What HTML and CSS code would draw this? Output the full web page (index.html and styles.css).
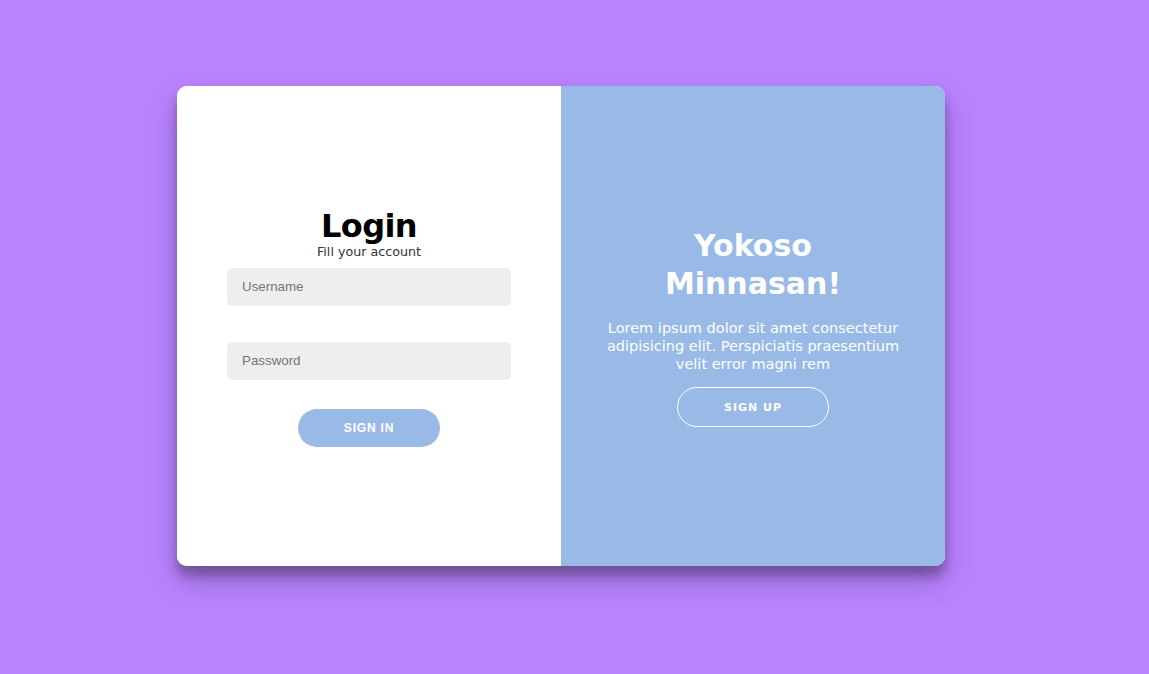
FILE: index.html
```html
<!DOCTYPE html>
<html lang="en">
<head>
<meta charset="utf-8">
<title>Login</title>
<link rel="stylesheet" href="styles.css">
</head>
<body>
<main class="page">
  <div class="card">
    <section class="panel panel-left">
      <form class="form">
        <h1 class="title">Login</h1>
        <p class="subtitle">Fill your account</p>
        <input class="field" type="text" placeholder="Username">
        <input class="field field-second" type="password" placeholder="Password">
        <button class="btn btn-fill" type="button">Sign In</button>
      </form>
    </section>
    <section class="panel panel-right">
      <h2 class="welcome">Yokoso<br>Minnasan!</h2>
      <p class="text">Lorem ipsum dolor sit amet consectetur<br>adipisicing elit. Perspiciatis praesentium<br>velit error magni rem</p>
      <button class="btn btn-ghost" type="button">Sign Up</button>
    </section>
  </div>
</main>
</body>
</html>
```
FILE: styles.css
```css
* { box-sizing: border-box; }
html, body { margin: 0; height: 100%; }
body {
  background: #b983ff;
  font-family: "DejaVu Sans", "Open Sans", sans-serif;
}
.page {
  height: 100%;
  display: flex;
  justify-content: center;
  align-items: center;
  padding: 0 27px 22px 0;
}
.card {
  width: 768px;
  height: 480px;
  display: flex;
  border-radius: 10px;
  overflow: hidden;
  background: #fff;
  box-shadow: 0 14px 28px rgba(0,0,0,0.25), 0 10px 10px rgba(0,0,0,0.22);
}
.panel {
  width: 384px;
  height: 100%;
  display: flex;
  flex-direction: column;
  align-items: center;
  justify-content: center;
  text-align: center;
  padding-top: 2px;
}
.panel-left { background: #fff; }
.panel-right { background: #99bae7; color: #fff; }
.form {
  display: flex;
  flex-direction: column;
  align-items: center;
  width: 100%;
  padding: 0 50px;
}
.title {
  margin: 0;
  font-size: 32px;
  line-height: 36px;
  font-weight: 700;
  letter-spacing: -0.6px;
  color: #000;
}
.subtitle {
  margin: 0 0 8px;
  font-size: 12.7px;
  line-height: 16px;
  color: #333;
}
.field {
  width: 284px;
  height: 38px;
  border: none;
  border-radius: 5px;
  background: #eee;
  padding: 0 15px;
  font-family: "Liberation Sans", Arial, sans-serif;
  font-size: 13.333px;
  color: #333;
  outline: none;
}
.field::placeholder { color: #757575; }
.field-second { margin-top: 36px; }
.btn {
  border-radius: 20px;
  font-weight: 700;
  text-transform: uppercase;
  color: #fff;
  cursor: pointer;
}
.btn-fill {
  margin-top: 29px;
  width: 142px;
  height: 38px;
  border: none;
  background: #99bae7;
  font-family: "Liberation Sans", Arial, sans-serif;
  font-size: 12px;
  letter-spacing: 0.8px;
}
.welcome {
  margin: 0;
  font-size: 30px;
  line-height: 38px;
  font-weight: 700;
}
.text {
  margin: 16px 0 14px;
  font-size: 14.5px;
  line-height: 18px;
  white-space: nowrap;
}
.btn-ghost {
  width: 152px;
  height: 40px;
  border: 1px solid #fff;
  background: transparent;
  font-family: "DejaVu Sans", sans-serif;
  font-size: 11px;
  letter-spacing: 1px;
}
```
